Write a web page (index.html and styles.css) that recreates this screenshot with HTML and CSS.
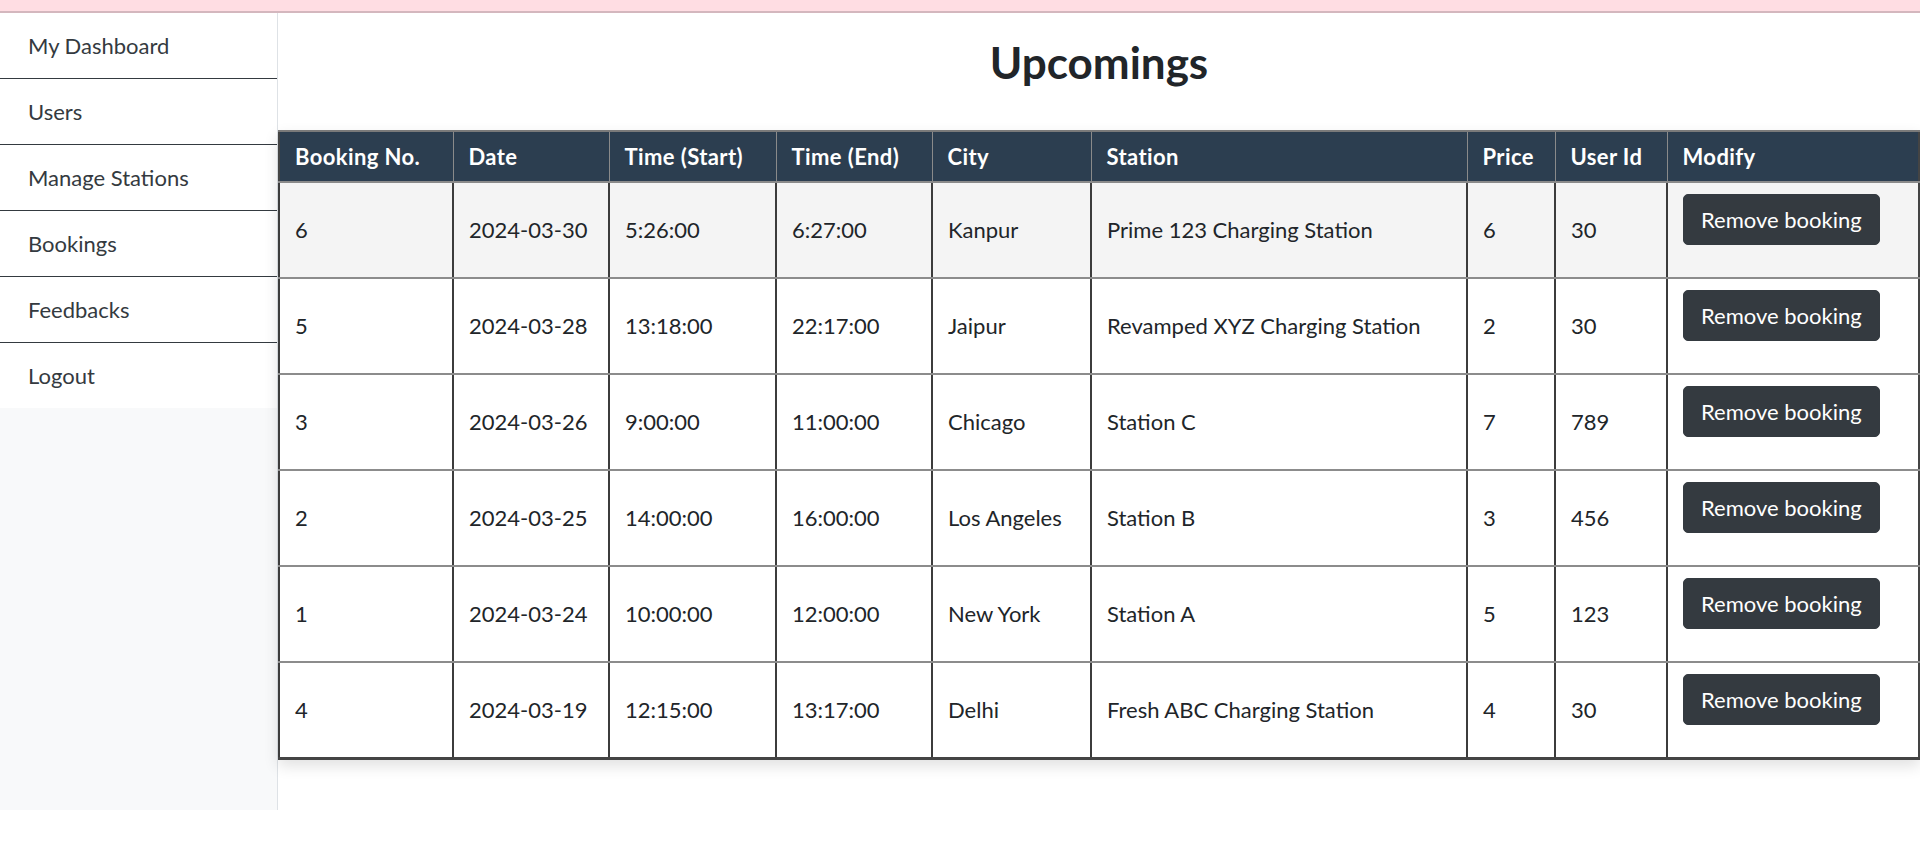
FILE: index.html
```html
<!DOCTYPE html>
<html lang="en">
<head>
<meta charset="utf-8">
<title>Upcomings</title>
<link rel="stylesheet" href="styles.css">
</head>
<body>
<div class="topbar"></div>
<div class="layout">
  <nav class="sidebar">
    <a class="nav-item" href="#">My Dashboard</a>
    <a class="nav-item" href="#">Users</a>
    <a class="nav-item" href="#">Manage Stations</a>
    <a class="nav-item" href="#">Bookings</a>
    <a class="nav-item" href="#">Feedbacks</a>
    <a class="nav-item" href="#">Logout</a>
  </nav>
  <main class="main">
    <h2 class="title">Upcomings</h2>
    <table class="bookings">
      <thead>
        <tr>
          <th class="c-no">Booking No.</th>
          <th class="c-date">Date</th>
          <th class="c-start">Time (Start)</th>
          <th class="c-end">Time (End)</th>
          <th class="c-city">City</th>
          <th class="c-station">Station</th>
          <th class="c-price">Price</th>
          <th class="c-user">User Id</th>
          <th class="c-mod">Modify</th>
        </tr>
      </thead>
      <tbody>
        <tr class="hover">
          <td>6</td><td>2024-03-30</td><td>5:26:00</td><td>6:27:00</td><td>Kanpur</td><td>Prime 123 Charging Station</td><td>6</td><td>30</td>
          <td class="mod"><form class="remove-form"><button type="button" class="btn">Remove booking</button></form></td>
        </tr>
        <tr>
          <td>5</td><td>2024-03-28</td><td>13:18:00</td><td>22:17:00</td><td>Jaipur</td><td>Revamped XYZ Charging Station</td><td>2</td><td>30</td>
          <td class="mod"><form class="remove-form"><button type="button" class="btn">Remove booking</button></form></td>
        </tr>
        <tr>
          <td>3</td><td>2024-03-26</td><td>9:00:00</td><td>11:00:00</td><td>Chicago</td><td>Station C</td><td>7</td><td>789</td>
          <td class="mod"><form class="remove-form"><button type="button" class="btn">Remove booking</button></form></td>
        </tr>
        <tr>
          <td>2</td><td>2024-03-25</td><td>14:00:00</td><td>16:00:00</td><td>Los Angeles</td><td>Station B</td><td>3</td><td>456</td>
          <td class="mod"><form class="remove-form"><button type="button" class="btn">Remove booking</button></form></td>
        </tr>
        <tr>
          <td>1</td><td>2024-03-24</td><td>10:00:00</td><td>12:00:00</td><td>New York</td><td>Station A</td><td>5</td><td>123</td>
          <td class="mod"><form class="remove-form"><button type="button" class="btn">Remove booking</button></form></td>
        </tr>
        <tr>
          <td>4</td><td>2024-03-19</td><td>12:15:00</td><td>13:17:00</td><td>Delhi</td><td>Fresh ABC Charging Station</td><td>4</td><td>30</td>
          <td class="mod"><form class="remove-form"><button type="button" class="btn">Remove booking</button></form></td>
        </tr>
      </tbody>
    </table>
  </main>
</div>
</body>
</html>
```
FILE: styles.css
```css
* { box-sizing: border-box; }

body {
  margin: 0;
  font-family: Lato, "Open Sans", "Liberation Sans", sans-serif;
  font-size: 22px;
  color: #212529;
  background: #fff;
}

.topbar {
  height: 13px;
  background: #ffdde3;
  border-bottom: 2px solid #d4b7be;
}

.layout {
  display: flex;
  height: 797px;
}

.sidebar {
  width: 278px;
  flex-shrink: 0;
  display: flex;
  flex-direction: column;
  background: #f8f9fa;
  border-right: 1px solid #dee2e6;
}

.nav-item {
  display: block;
  background: #fff;
  padding: 16px 28px;
  line-height: 33px;
  color: #343a40;
  text-decoration: none;
  border-bottom: 1px solid #343a40;
}

.nav-item:last-child {
  border-bottom: none;
}

.main {
  flex: 1;
  min-width: 0;
}

.title {
  margin: 23px 0 41px;
  text-align: center;
  font-size: 44px;
  line-height: 1.2;
  font-weight: 700;
  color: #212529;
}

.bookings {
  width: 100%;
  table-layout: fixed;
  border-collapse: collapse;
  border: 2px solid #444;
  box-shadow: 0 6px 14px rgba(0, 0, 0, 0.12);
}

.bookings th {
  background: #2c3e50;
  color: #fff;
  font-weight: 700;
  letter-spacing: 0.4px;
  text-align: left;
  padding: 8px 15px;
  line-height: 33px;
  border-top: 2px solid #7a7a7a;
  border-left: 1px solid #8a8a8a;
  border-bottom: 2px solid #8a8a8a;
  white-space: nowrap;
}

.c-no { width: 174px; }
.c-date { width: 156px; }
.c-start { width: 167px; }
.c-end { width: 156px; }
.c-city { width: 159px; }
.c-station { width: 376px; }
.c-price { width: 88px; }
.c-user { width: 112px; }

.bookings td {
  padding: 11px 15px;
  line-height: 33px;
  vertical-align: middle;
  border-left: 2px solid #3c3c3c;
  border-bottom: 2px solid #8c8c8c;
  white-space: nowrap;
}

.bookings tbody tr:last-child td {
  border-bottom: 3px solid #444;
}

.bookings tr.hover td {
  background: #f4f4f4;
}

.remove-form {
  margin: 0 0 21px;
}

.btn {
  display: inline-block;
  font-family: inherit;
  font-size: 22px;
  line-height: 33px;
  padding: 8px 17px;
  color: #fff;
  background: #343a40;
  border: 1px solid #343a40;
  border-radius: 5px;
  cursor: pointer;
}
```
